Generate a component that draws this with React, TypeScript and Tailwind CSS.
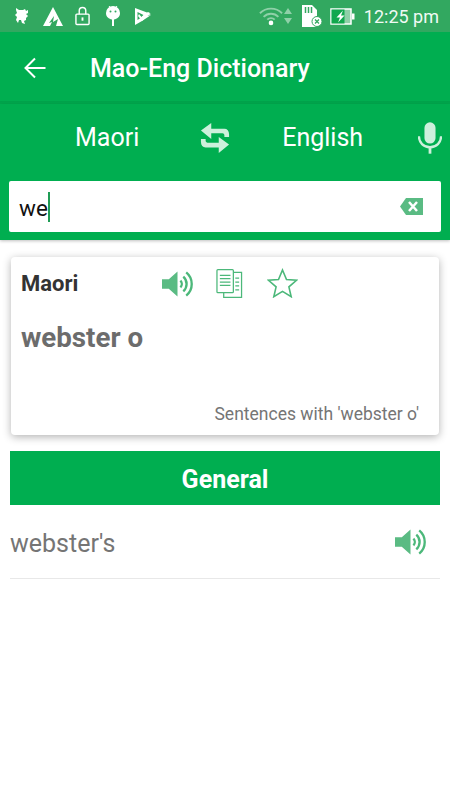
import React from "react";

const Speaker = ({ className }: { className: string }) => (
  <svg viewBox="0 0 32 28" className={className} fill="none">
    <path d="M0 9h7l9-8v26l-9-8H0z" fill="#5abb83" />
    <path d="M19 10.500a5 5 0 0 1 0 7" stroke="#4cb87a" strokeWidth="2.400" />
    <path d="M22 6.500a10 10 0 0 1 0 15" stroke="#4cb87a" strokeWidth="2.400" />
    <path d="M25 2a15.500 15.500 0 0 1 0 24" stroke="#4cb87a" strokeWidth="2.400" />
  </svg>
);

const StatusIcons = () => (
  <div className="flex items-center">
    <svg viewBox="0 0 14 18" className="ml-[15px] h-[18px] w-[14px]" fill="#fff">
      <path d="M1 1l3 2h4l2-1 1 2 2-1v3l-2 1 2 2-2 2v2l-2 1 1 3-3-1-1-3H4l-1 3-2-3 1-3-2-2 2-2-1-3z" />
    </svg>
    <svg viewBox="0 0 20 19" className="ml-[14px] h-[19px] w-[20px]" fill="#fff">
      <path d="M10 0l10 19h-7l2-7-5 3 1-6-5 7 3-1-2 4H0z" />
    </svg>
    <svg viewBox="0 0 16 20" className="ml-[12px] h-[20px] w-[15px]" fill="none" stroke="#fff" strokeWidth="1.500">
      <rect x="1" y="8" width="14" height="11" rx="1" />
      <path d="M4.500 8V4.500a3.500 3.500 0 0 1 7 0V8" />
      <rect x="7" y="11.500" width="2" height="3.500" fill="#fff" stroke="none" />
    </svg>
    <svg viewBox="0 0 14 20" className="ml-[16px] h-[20px] w-[14px]" fill="#fff">
      <path d="M0 7a7 7 0 0 1 14 0c0 4-3 6-6 6.500V20H6v-6.500C3 13 0 11 0 7z" />
      <path d="M3 0l1.500 2M11 0L9.500 2" stroke="#fff" />
      <circle cx="4.500" cy="5.500" r="1" fill="#32a860" />
      <circle cx="9.500" cy="5.500" r="1" fill="#32a860" />
    </svg>
    <svg viewBox="0 0 16 17" className="ml-[15px] h-[17px] w-[16px]" fill="#fff">
      <path d="M0 0l16 6-4 2 4-1-9 6-7 4zM2.500 4v8l3-2 3-3z" fillRule="evenodd" />
      <path d="M4 6l2.500 3L13 4l2 1-8 8-4-5z" />
    </svg>
  </div>
);

const StatusRight = () => (
  <div className="flex items-center">
    <svg viewBox="0 0 26 20" className="h-[20px] w-[24px]" fill="none" stroke="#8fd0a8" strokeWidth="2">
      <path d="M1 7a17 17 0 0 1 24 0" />
      <path d="M5 11a11 11 0 0 1 16 0" />
      <path d="M9 14a5.500 5.500 0 0 1 8 0" />
      <circle cx="13" cy="17.500" r="2.500" fill="#fff" stroke="none" />
    </svg>
    <svg viewBox="0 0 8 16" className="ml-[1px] h-[16px] w-[8px]" fill="#8fd0a8">
      <path d="M4 0l4 6H0zM0 10h8l-4 6z" />
    </svg>
    <svg viewBox="0 0 22 22" className="ml-[9px] h-[22px] w-[22px]" fill="#fff">
      <path d="M1 0h10l5 5v17H1z" />
      <path d="M4.500 2v6M7.500 2v6M10.500 2v6" stroke="#32a860" strokeWidth="1.500" />
      <circle cx="16" cy="16.500" r="5" fill="#fff" stroke="#32a860" strokeWidth="1" />
      <path d="M14 14.500l4 4M18 14.500l-4 4" stroke="#32a860" strokeWidth="1.300" />
    </svg>
    <svg viewBox="0 0 25 17" className="ml-[7px] h-[17px] w-[25px]" fill="none">
      <rect x="1" y="1" width="20" height="15" stroke="#fff" strokeWidth="1.500" fill="#8fd0a8" />
      <rect x="1.500" y="1.500" width="13" height="14" fill="#11a84e" />
      <rect x="22" y="5.500" width="2.500" height="6" fill="#fff" />
      <path d="M13 2.500L6.500 9.500H10l-2 5L14.500 7.500H11z" fill="#fff" />
    </svg>
    <span className="ml-[9px] text-[18px] text-[#f0faf4]">12:25 pm</span>
  </div>
);

export default function App() {
  return (
    <div className="flex h-[800px] w-[450px] flex-col overflow-hidden bg-white font-[Roboto,sans-serif]">
      <div className="flex h-[32px] items-center justify-between bg-[#32a860] pr-[11px]">
        <StatusIcons />
        <StatusRight />
      </div>
      <div className="flex h-[69px] items-center bg-[#00ae50] pt-[2px]">
        <svg viewBox="0 0 24 24" className="ml-[23px] h-[24px] w-[24px]" fill="none" stroke="#fff" strokeWidth="2">
          <path d="M22.500 12H2.500M12 2.500L2.500 12l9.500 9.500" />
        </svg>
        <span className="ml-[43px] pt-[2px] text-[25px] font-medium text-white">Mao-Eng Dictionary</span>
      </div>
      <div className="h-[3px] bg-gradient-to-b from-[#00a049] to-[#00aa4e]" />
      <div className="flex h-[136px] flex-col bg-[#00ae50] shadow-[0_1px_3px_rgba(0,0,0,0.25)]">
        <div className="flex h-[67px] items-center">
          <span className="ml-[75px] text-[25px] text-white">Maori</span>
          <svg viewBox="0 0 32 32" className="ml-[61px] h-[32px] w-[30px]" fill="#cdf0dc">
            <path d="M12 0v6h14c3 0 5 2 5 6v3h-5v-2c0-1-1-2-2-2H12v6L1 8zM20 32v-6H6c-3 0-5-2-5-6v-3h5v2c0 1 1 2 2 2h12v-6l11 8z" />
          </svg>
          <span className="ml-[52px] text-[25px] text-white">English</span>
          <svg viewBox="0 0 26 34" className="ml-[55px] h-[34px] w-[24px]" fill="none">
            <rect x="7" y="0" width="12" height="23" rx="6" fill="#cdf0dc" />
            <path d="M1 15c0 7 5 12 12 12s12-5 12-12" stroke="#cdf0dc" strokeWidth="2.500" />
            <path d="M13 27v7" stroke="#cdf0dc" strokeWidth="3" />
          </svg>
        </div>
        <div className="mx-[9px] mt-[10px] flex h-[51px] items-center rounded-[2px] bg-white pl-[10px] pr-[18px]">
          <span className="pt-[2px] text-[22.5px] leading-[28px] text-[#111]">we</span>
          <div className="h-[30px] w-[2px] bg-[#1f9c55]" />
          <svg viewBox="0 0 23 17" className="ml-auto h-[17px] w-[23px]">
            <path d="M6 0h17v17H6L0 8.500z" fill="#5abb83" />
            <path d="M9 4l8 9M17 4l-8 9" stroke="#fff" strokeWidth="2.500" />
          </svg>
        </div>
      </div>
      <div className="mx-[11px] mt-[17px] flex h-[178px] flex-col rounded-[4px] bg-white shadow-[0_2px_8px_rgba(0,0,0,0.3)]">
        <div className="flex h-[54px] items-center pl-[10px]">
          <span className="w-[141px] text-[22px] font-bold leading-[26px] text-[#333]">Maori</span>
          <Speaker className="h-[28px] w-[31px]" />
          <svg viewBox="0 0 28 31" className="ml-[23px] mb-[2px] h-[31px] w-[27px]" fill="none" stroke="#4cb87a" strokeWidth="1.300">
            <path d="M18 4h8.500v26H8V25" />
            <rect x="1" y="1" width="17" height="24" rx="1" fill="#fff" />
            <path d="M4 7h11M4 10.500h11M4 14h11M4 17.500h11M20 10h4M20 14h4M20 18h4M20 22h4" />
          </svg>
          <svg viewBox="0 0 31 30" className="ml-[24px] mb-[2px] h-[30px] w-[31px]" fill="none" stroke="#4cb87a" strokeWidth="1.600">
            <path d="M15.500 2l4 9.500 10 .8-7.600 6.600 2.300 9.800-8.700-5.300-8.700 5.300 2.300-9.800L1.500 12.300l10-.8z" />
          </svg>
        </div>
        <div className="mt-[11px] pl-[10px] text-[27.700px] font-bold leading-[32px] text-[#6c6c6c]">webster o</div>
        <div className="mt-auto mb-[11px] pr-[20px] text-right text-[17.500px] leading-[20px] text-[#757575]">Sentences with 'webster o'</div>
      </div>
      <div className="mx-[10px] mt-[16px] flex h-[54px] items-center justify-center bg-[#00ae50] pt-[3px] text-[25px] font-bold text-white">General</div>
      <div className="mx-[10px] flex h-[74px] items-center justify-between border-b border-[#e8e8e8] pt-[3px]">
        <span className="pt-[1px] text-[25px] text-[#757575]">webster's</span>
        <Speaker className="mr-[14px] mb-[3px] h-[28px] w-[31px]" />
      </div>
    </div>
  );
}
